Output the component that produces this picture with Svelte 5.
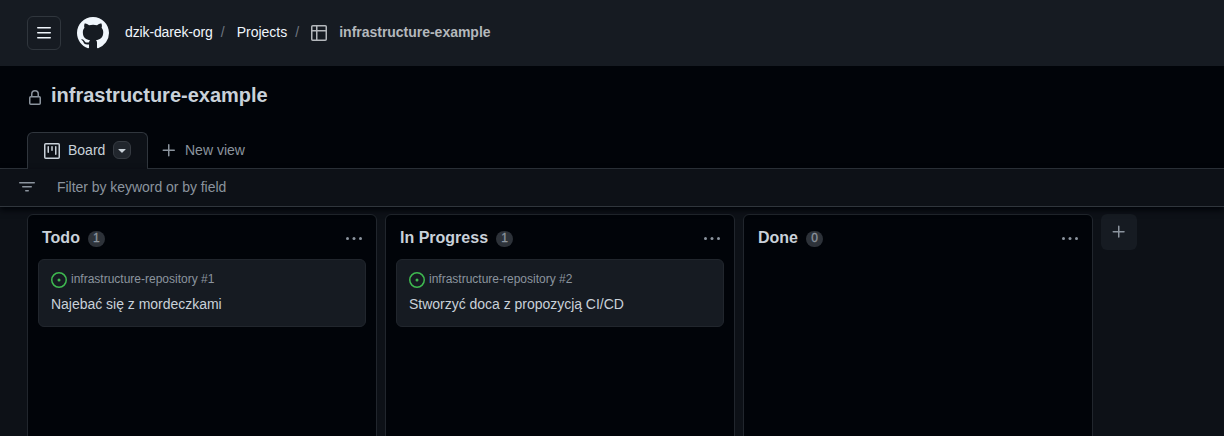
<script>
  const columns = [
    { name: 'Todo', cards: [{ ref: 'infrastructure-repository #1', title: 'Najebać się z mordeczkami' }] },
    { name: 'In Progress', cards: [{ ref: 'infrastructure-repository #2', title: 'Stworzyć doca z propozycją CI/CD' }] },
    { name: 'Done', cards: [] }
  ];
</script>

<div class="app">
  <header>
    <button class="menu" aria-label="Menu">
      <svg width="16" height="16" viewBox="0 0 16 16"><path d="M1.75 2.75h12.5M1.75 7.75h12.5M1.75 12.75h12.5" stroke="currentColor" stroke-width="1.5" stroke-linecap="round" /></svg>
    </button>
    <svg class="logo" width="32" height="32" viewBox="0 0 16 16" fill="currentColor"><path d="M8 0C3.58 0 0 3.58 0 8c0 3.54 2.29 6.53 5.47 7.59.4.07.55-.17.55-.38 0-.19-.01-.82-.01-1.49-2.01.37-2.53-.49-2.69-.94-.09-.23-.48-.94-.82-1.13-.28-.15-.68-.52-.01-.53.63-.01 1.08.58 1.23.82.72 1.21 1.87.87 2.33.66.07-.52.28-.87.51-1.07-1.78-.2-3.64-.89-3.64-3.95 0-.87.31-1.59.82-2.15-.08-.2-.36-1.02.08-2.12 0 0 .67-.21 2.2.82.64-.18 1.32-.27 2-.27.68 0 1.36.09 2 .27 1.53-1.04 2.2-.82 2.2-.82.44 1.1.16 1.92.08 2.12.51.56.82 1.27.82 2.15 0 3.07-1.87 3.75-3.65 3.95.29.25.54.73.54 1.48 0 1.07-.01 1.93-.01 2.2 0 .21.15.46.55.38A8.013 8.013 0 0016 8c0-4.42-3.58-8-8-8z" /></svg>
    <nav>
      <span class="org">dzik-darek-org</span><span class="sep">/</span><span>Projects</span><span class="sep">/</span>
      <svg class="table" width="16" height="16" viewBox="0 0 16 16" fill="none" stroke="currentColor" stroke-width="1.5"><rect x=".75" y=".75" width="14.5" height="14.5" rx="1" /><path d="M.75 5.75h14.5M5.75.75v14.5" /></svg>
      <b>infrastructure-example</b>
    </nav>
  </header>

  <div class="title">
    <svg width="16" height="16" viewBox="0 0 16 16" fill="none" stroke="currentColor" stroke-width="1.5"><rect x="2.75" y="6.75" width="10.5" height="7.5" rx="1" /><path d="M4.75 6.75V4a3.25 3.25 0 0 1 6.5 0v2.75" /></svg>
    <h1>infrastructure-example</h1>
  </div>

  <div class="tabs">
    <div class="tab">
      <svg width="16" height="16" viewBox="0 0 16 16" fill="none" stroke="currentColor" stroke-width="1.5"><rect x=".75" y=".75" width="14.5" height="14.5" rx="1" /><path d="M4.25 3.75v5.5M8 3.75v3.5M11.75 3.75v7.5" stroke-linecap="round" /></svg>
      <span>Board</span>
      <button class="drop" aria-label="View options"><svg width="16" height="16" viewBox="0 0 16 16" fill="currentColor"><path d="M4.427 7.427l3.396 3.396a.25.25 0 0 0 .354 0l3.396-3.396A.25.25 0 0 0 11.396 7H4.604a.25.25 0 0 0-.177.427z" /></svg></button>
    </div>
    <div class="new">
      <svg width="16" height="16" viewBox="0 0 16 16"><path d="M7.75 2.75v11M2.25 8.25h11" stroke="currentColor" stroke-width="1.5" stroke-linecap="round" /></svg>
      <span>New view</span>
    </div>
  </div>

  <div class="filter">
    <svg width="16" height="16" viewBox="0 0 16 16"><path d="M.75 3.75h14.5M3.75 7.75h8.5M6.75 11.75h2.5" stroke="currentColor" stroke-width="1.5" stroke-linecap="round" /></svg>
    <span>Filter by keyword or by field</span>
  </div>

  <main>
    {#each columns as column}
      <section>
        <div class="head">
          <h2>{column.name}</h2>
          <span class="count">{column.cards.length}</span>
          <svg class="dots" width="16" height="16" viewBox="0 0 16 16" fill="currentColor"><circle cx="1.5" cy="8.5" r="1.5" /><circle cx="8" cy="8.5" r="1.5" /><circle cx="14.5" cy="8.5" r="1.5" /></svg>
        </div>
        {#each column.cards as card}
          <article>
            <div class="ref">
              <svg width="16" height="16" viewBox="0 0 16 16"><circle cx="8" cy="8" r="7.25" fill="none" stroke="currentColor" stroke-width="1.5" /><circle cx="8" cy="8" r="1.5" fill="currentColor" /></svg>
              <span>{card.ref}</span>
            </div>
            <p>{card.title}</p>
          </article>
        {/each}
      </section>
    {/each}
    <button class="add" aria-label="Add column"><svg width="16" height="16" viewBox="0 0 16 16"><path d="M7.75 2.25v10.75M2.25 7.75h10.75" stroke="currentColor" stroke-width="1.5" stroke-linecap="round" /></svg></button>
  </main>
</div>

<style>
  :global(body) { margin: 0; background: #010409; }
  * { box-sizing: border-box; }
  svg { display: block; flex: none; }
  h1, h2, p { margin: 0; }
  button { padding: 0; font: inherit; display: flex; align-items: center; justify-content: center; flex: none; }
  .app { width: 1224px; height: 436px; overflow: hidden; display: flex; flex-direction: column; background: #010409; color: #c9d1d9; font: 14px/20px "Liberation Sans", Arial, sans-serif; }
  header { height: 66px; flex: none; display: flex; align-items: center; padding-left: 27px; background: #161b22; color: #f0f6fc; }
  .menu { width: 34px; height: 34px; border: 1px solid #30363d; border-radius: 6px; background: transparent; color: #f0f6fc; }
  .logo { margin-left: 16px; }
  nav { display: flex; align-items: center; margin-left: 16px; padding-bottom: 2px; white-space: nowrap; }
  .org { letter-spacing: -0.13px; }
  .sep { width: 24px; text-align: center; color: #6e7681; padding-right: 4px; }
  .table { margin: 2px 12px 0 0; color: #b4b8bc; }
  nav b { color: #b4b8bc; letter-spacing: -0.02px; }
  .title { height: 66px; flex: none; display: flex; align-items: flex-start; padding: 14px 0 0 27px; }
  .title svg { margin: 10px 8px 0 0; color: #8b949e; }
  h1 { font-size: 20px; line-height: 30px; }
  .tabs { height: 37px; flex: none; display: flex; padding-left: 27px; box-shadow: inset 0 -1px #30363d; }
  .tab { width: 121px; height: 37px; display: flex; align-items: center; gap: 8px; padding: 0 0 2px 16px; border: 1px solid #30363d; border-bottom: 0; border-radius: 6px 6px 0 0; background: #0d1117; }
  .tab > svg { margin-top: 2px; }
  .drop { width: 18px; height: 18px; border: 1px solid #363b42; border-radius: 6px; background: #21262d; color: #c9d1d9; }
  .new { display: flex; align-items: center; gap: 8px; padding: 0 0 1px 13px; color: #8b949e; }
  .filter { height: 38px; flex: none; position: relative; display: flex; align-items: center; gap: 22px; padding: 0 0 1px 19px; border-bottom: 1px solid #30363d; background: #0d1117; color: #8b949e; box-shadow: 0 3px 6px #010409; }
  .filter span { letter-spacing: -0.04px; }
  main { flex: 1; min-height: 0; display: flex; align-items: flex-start; gap: 8px; padding: 7px 0 0 27px; background: #0d1117; }
  section { width: 350px; height: 230px; flex: none; border: 1px solid #21262d; border-radius: 6px; background: #010409; padding: 0 10px; }
  .head { height: 44px; display: flex; align-items: center; padding: 2px 4px 0 4px; }
  h2 { font-size: 16px; line-height: 24px; }
  .count { min-width: 17px; height: 16px; margin: 2px 0 0 8px; border-radius: 8px; background: #2d3239; color: #8b949e; font-size: 12px; line-height: 15px; text-align: center; -webkit-text-stroke: 0.3px #8b949e; }
  .dots { margin-left: auto; color: #8b949e; }
  article { height: 68px; border: 1px solid #21262d; border-radius: 6px; background: #161b22; padding: 10px 12px; }
  .ref { display: flex; align-items: center; gap: 4px; height: 18px; color: #8b949e; font-size: 12px; line-height: 18px; }
  .ref svg { margin-top: 2px; color: #3fb950; }
  article p { margin-top: 6px; letter-spacing: -0.02px; }
  .add { width: 36px; height: 36px; border: 0; border-radius: 6px; background: #161b22; color: #8b949e; }
</style>
